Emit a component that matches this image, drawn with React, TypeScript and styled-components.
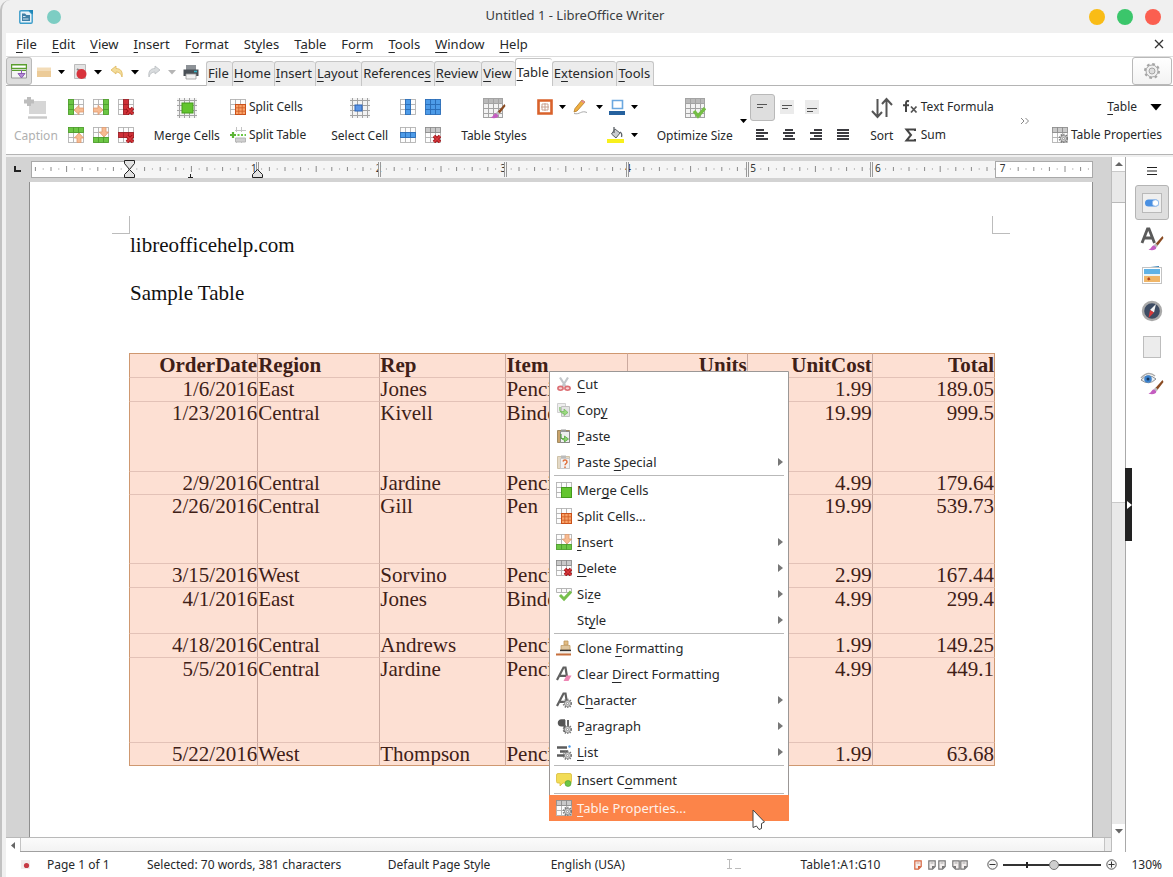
import React from 'react';
import styled, { createGlobalStyle, css } from 'styled-components';

const uiFont = '"Noto Sans", "Open Sans", sans-serif';
const docFont = '"Liberation Serif", "Times New Roman", serif';

const GlobalStyle = createGlobalStyle`
  *, *::before, *::after { box-sizing: border-box; }
  body { margin: 0; background: #efefef; font-family: ${uiFont}; font-size: 13px; color: #26282a; }
  button { font: inherit; color: inherit; border: 0; padding: 0; margin: 0; background: none; }
  u { text-decoration: underline; text-decoration-thickness: 1px; text-underline-offset: 3px; text-decoration-skip-ink: none; }
`;

/* ---------- window frame ---------- */

const Window = styled.div`
  display: flex;
  flex-direction: column;
  min-height: 100vh;
  padding-left: 4px;
  border-left: 2px solid #c2c2c2;
  border-top-left-radius: 10px;
  background: #f0f0f0;
`;

const TitleBar = styled.header`
  display: flex;
  align-items: center;
  height: 33px;
  padding: 0 12px 0 13px;
`;

const Title = styled.h1`
  flex: 1;
  margin: 0;
  padding-bottom: 3px;
  text-align: center;
  font-size: 13px;
  font-weight: 400;
  line-height: 18px;
  color: #3a3d40;
`;

const WindowButtons = styled.div<{ $before?: number }>`
  display: flex;
  align-items: center;
  gap: 12px;
  margin-left: ${p => p.$before ?? 0}px;
`;

const Dot = styled.button<{ $color: string; $size?: number }>`
  width: ${p => p.$size ?? 16}px;
  height: ${p => p.$size ?? 16}px;
  border-radius: 50%;
  background: ${p => p.$color};
`;

const MenuBar = styled.nav`
  display: flex;
  align-items: center;
  justify-content: space-between;
  height: 24px;
  padding: 0 8px 2px 10px;
  background: #fff;
  border-bottom: 1px solid #dcdcdc;
`;

const MenuItems = styled.div`
  display: flex;
  gap: 15px;
`;

const MenuButton = styled.button`
  line-height: 20px;
`;

const CloseButton = styled.button`
  display: flex;
`;

/* ---------- tab row ---------- */

const TabRow = styled.div`
  display: flex;
  align-items: flex-end;
  height: 29px;
  padding-right: 1px;
  background: #fff;
  border-bottom: 1px solid #b4b4b4;
`;

const FrameButton = styled.button<{ $right?: boolean }>`
  display: flex;
  align-items: center;
  justify-content: center;
  width: ${p => (p.$right ? 40 : 26)}px;
  height: 28px;
  margin-left: ${p => (p.$right ? 'auto' : '0')};
  border: 1px solid #b9b9b9;
  border-radius: 3px;
  background: ${p => (p.$right ? 'linear-gradient(#fff, #f3f3f3)' : '#dedede')};
`;

const QuickTools = styled.div`
  display: flex;
  align-items: center;
  height: 26px;
  gap: 6px;
  padding: 0 6px 0 3px;
`;

const QuickPair = styled.div`
  display: flex;
  align-items: center;
  gap: 5px;
`;

const IconButton = styled.button`
  display: flex;
  align-items: center;
  justify-content: center;
`;

const Tabs = styled.div`
  display: flex;
  align-items: flex-end;
  margin-bottom: -1px;
`;

const Tab = styled.button<{ $active?: boolean }>`
  height: ${p => (p.$active ? 28 : 25)}px;
  padding: 0 3px 2px 1px;
  line-height: 20px;
  border: 1px solid #c6c6c6;
  border-bottom: 0;
  border-right-width: 0;
  border-radius: 3px 3px 0 0;
  background: ${p => (p.$active ? '#fff' : '#ececec')};
  &:last-child { border-right-width: 1px; }
`;

/* ---------- ribbon ---------- */

const Ribbon = styled.div`
  display: flex;
  height: 69px;
  padding: 7px 11px 5px 8px;
  background: #fff;
  border-bottom: 1px solid #b4b4b4;
  font-size: 12px;
  white-space: nowrap;
`;

const Group = styled.div<{ $before?: number; $push?: boolean }>`
  display: flex;
  flex-direction: column;
  flex: none;
  margin-left: ${p => (p.$push ? 'auto' : `${p.$before ?? 0}px`)};
`;

const GroupRow = styled.div<{ $gap?: number; $end?: boolean }>`
  display: flex;
  align-items: center;
  justify-content: ${p => (p.$end ? 'flex-end' : 'flex-start')};
  height: 28px;
  gap: ${p => p.$gap ?? 0}px;
`;

const BigButton = styled.button<{ $before?: number; $muted?: boolean }>`
  display: flex;
  flex: none;
  flex-direction: column;
  align-items: center;
  height: 56px;
  margin-left: ${p => p.$before ?? 0}px;
  color: ${p => (p.$muted ? '#b0b0b0' : 'inherit')};
`;

const BigIcon = styled.span`
  display: flex;
  align-items: center;
  height: 30px;
`;

const BigLabel = styled.span`
  line-height: 26px;
`;

const TextButton = styled.button`
  display: flex;
  align-items: center;
  gap: 3px;
  line-height: 20px;
`;

const AlignButton = styled.button<{ $on?: boolean }>`
  display: flex;
  align-items: center;
  justify-content: center;
  width: 25px;
  height: 27px;
  border-radius: 3px;
  border: 1px solid ${p => (p.$on ? '#b9b9b9' : 'transparent')};
  background: ${p => (p.$on ? '#dedede' : 'transparent')};
`;

const SideSlot = styled.div<{ $before: number }>`
  display: flex;
  align-items: center;
  height: 56px;
  margin-left: ${p => p.$before}px;
`;

/* ---------- work area ---------- */

const Work = styled.div`
  display: flex;
  flex: 1;
  padding-top: 2px;
`;

const Main = styled.div`
  display: flex;
  flex: 1;
  min-width: 0;
  flex-direction: column;
`;

const Canvas = styled.div`
  display: flex;
  flex: 1;
  flex-direction: column;
  padding: 4px 18px 0 23px;
  background: #d3d3d3;
`;

const Ruler = styled.div`
  position: relative;
  display: flex;
  height: 17px;
  margin: 0 0 4px 2px;
`;

const RulerMargin = styled.div`
  width: 98px;
  border: 1px solid #a9a9a9;
  background: #fff;
`;

const RulerBody = styled.div`
  flex: 1;
  background: #f5f5f5;
`;

const RulerMarks = styled.svg`
  position: absolute;
  inset: 0;
  width: 100%;
  height: 17px;
  overflow: visible;
`;

const TabStop = styled.div`
  position: absolute;
  left: -17px;
  top: 5px;
  width: 7px;
  height: 6px;
  border-left: 2px solid #222;
  border-bottom: 2px solid #222;
`;

const Page = styled.main`
  position: relative;
  flex: 1;
  padding: 51px 97px 71px 99px;
  background: #fff;
  border-left: 1px solid #8f8f8f;
  border-right: 1px solid #8f8f8f;
  font-family: ${docFont};
  font-size: 21px;
  line-height: 24px;
  color: #111;
`;

const Corner = styled.span<{ $side: 'left' | 'right' }>`
  position: absolute;
  top: 34px;
  ${p => p.$side}: 82px;
  width: 18px;
  height: 18px;
  border-bottom: 1px solid #bcbcbc;
  ${p => (p.$side === 'left' ? 'border-right' : 'border-left')}: 1px solid #bcbcbc;
`;

const Para = styled.p`
  margin: 0;
  min-height: 24px;
  padding-left: 1px;
`;

const DataTable = styled.table`
  width: 100%;
  table-layout: fixed;
  border-collapse: separate;
  border-spacing: 0;
  background: #fde0d3;
  color: #3f2017;
`;

const DataRow = styled.tr<{ $height: number }>`
  height: ${p => p.$height}px;
`;

const cell = css<{ $right?: boolean }>`
  padding: 0;
  line-height: 22px;
  vertical-align: top;
  overflow: hidden;
  white-space: nowrap;
  text-align: ${p => (p.$right ? 'right' : 'left')};
  border-top: 1px solid #e3c2b7;
  border-left: 1px solid #cbaa9f;
  tr:first-child > & { border-top-color: #cf9870; }
  tr:last-child > & { border-bottom: 1px solid #cf9870; }
  &:first-child { border-left-color: #cf9870; }
  &:last-child { border-right: 1px solid #cf9870; }
`;

const HeadCell = styled.th<{ $right?: boolean }>`${cell}`;
const BodyCell = styled.td<{ $right?: boolean }>`${cell}`;

/* ---------- scroll bars ---------- */

const VScroll = styled.div`
  display: flex;
  flex-direction: column;
  width: 15px;
  background: #e9e9e9;
  border-left: 1px solid #bdbdbd;
  border-right: 1px solid #a9a9a9;
`;

const ScrollEnd = styled.button<{ $wide?: boolean }>`
  display: flex;
  align-items: center;
  justify-content: center;
  width: ${p => (p.$wide ? '14px' : '100%')};
  height: 14px;
  background: #fff;
`;

const VGap = styled.div<{ $grow: number }>`
  flex: ${p => p.$grow};
  border-top: 1px solid #c9c9c9;
`;

const VThumb = styled.div`
  flex: 300;
  background: #fdfdfd;
  border-top: 1px solid #b9b9b9;
`;

const HScroll = styled.div`
  display: flex;
  height: 15px;
  padding-right: 6px;
  border-top: 1px solid #b9b9b9;
  border-bottom: 1px solid #a0a0a0;
  background: #ececec;
`;

const HThumb = styled.div`
  flex: 1;
  background: linear-gradient(#fbfbfb, #f3f3f3);
  border-left: 1px solid #c4c4c4;
  border-right: 1px solid #c4c4c4;
`;

/* ---------- sidebar ---------- */

const Sidebar = styled.aside`
  position: relative;
  display: flex;
  flex-direction: column;
  align-items: center;
  gap: 1px;
  width: 47px;
  padding: 5px 0 0 5px;
  background: #fff;
`;

const SideMenu = styled.button`
  display: flex;
  height: 18px;
  align-items: center;
  margin-bottom: 4px;
`;

const DeckButton = styled.button<{ $on?: boolean }>`
  display: flex;
  align-items: center;
  justify-content: center;
  width: 34px;
  height: 35px;
  border-radius: 3px;
  border: 1px solid ${p => (p.$on ? '#b4b4b4' : 'transparent')};
  background: ${p => (p.$on ? '#dedede' : 'transparent')};
`;

const Handle = styled.button`
  position: absolute;
  left: -1px;
  top: calc(50% - 37px);
  width: 7px;
  height: 73px;
  background: #222;
`;

/* ---------- status bar ---------- */

const StatusBar = styled.footer`
  display: grid;
  grid-template-columns: 27px 100px 241fr 163fr 176fr 74fr 114fr auto;
  align-items: center;
  height: 25px;
  padding: 0 11px 0 14px;
  background: #fff;
  font-size: 12px;
  white-space: nowrap;
`;

const StatusTools = styled.div`
  display: flex;
  align-items: center;
`;

const ViewIcons = styled.div`
  display: flex;
  gap: 6px;
  margin-right: 19px;
`;

const ZoomRange = styled.input`
  appearance: none;
  width: 98px;
  height: 12px;
  margin: 0 5px;
  background:
    linear-gradient(#222, #222) 23px 3px / 2px 6px no-repeat,
    linear-gradient(#333, #333) 0 5px / 100% 2px no-repeat;
  &::-webkit-slider-thumb {
    appearance: none;
    width: 10px;
    height: 10px;
    border: 1px solid #777;
    border-radius: 50%;
    background: #cfcfcf;
  }
`;

const ZoomValue = styled.span`
  margin-left: 14px;
`;

/* ---------- context menu ---------- */

const Popup = styled.div`
  position: absolute;
  left: 519px;
  top: 189px;
  z-index: 2;
  width: 240px;
  background: #fff;
  border-radius: 1px;
  box-shadow: inset 0 0 0 1px #9b9796;
  font-family: ${uiFont};
  font-size: 13px;
  color: #26282a;
`;

const PopupItem = styled.button<{ $on?: boolean }>`
  display: flex;
  align-items: center;
  width: 100%;
  height: 26px;
  padding: 0 6px 0 7px;
  gap: 4px;
  text-align: left;
  line-height: 20px;
  ${p => p.$on && css`background: #fc8449; color: #fff1e8;`}
`;

const PopupIcon = styled.span`
  display: flex;
  width: 17px;
`;

const PopupText = styled.span`
  flex: 1;
`;

const PopupRule = styled.hr`
  height: 2px;
  margin: 0 5px;
  border: 0;
  background: linear-gradient(#b9b9b9 50%, transparent 50%);
`;

const Pointer = styled.svg`
  position: absolute;
  left: 722px;
  top: 627px;
  z-index: 3;
`;

/* ---------- helpers and icons ---------- */

/* "_" marks the access key: the letter after it is underlined. */
const Label = ({ text }: { text: string }) => {
  const at = text.indexOf('_');
  if (at < 0) return <>{text}</>;
  return <>{text.slice(0, at)}<u>{text[at + 1]}</u>{text.slice(at + 2)}</>;
};

const Down = ({ color = '#000', w = 8 }: { color?: string; w?: number }) => (
  <svg width={w} height={w / 2 + 1} viewBox="0 0 8 5"><path d="M0 0H8L4 4.6Z" fill={color} /></svg>
);

const Arrow = ({ dir, at = 'br' }: { dir: 'l' | 'r' | 'u' | 'd'; at?: string }) => {
  const turn = { l: 0, u: 90, r: 180, d: 270 }[dir];
  const [x, y] = at === 'br' ? [11, 11] : at === 'bl' ? [5, 11] : [11, 5];
  return (
    <g transform={`translate(${x} ${y}) rotate(${turn})`}>
      <path d="M-5 0L0-4.6V-2H4.6V2H0V4.6Z" fill="#f7bb92" stroke="#e09a6e" strokeWidth=".8" />
    </g>
  );
};

const Cross = () => (
  <g>
    <path d="M9 9L15 15M15 9L9 15" stroke="#a01218" strokeWidth="3.6" />
    <path d="M9 9L15 15M15 9L9 15" stroke="#d8383c" strokeWidth="1.6" />
  </g>
);

const Gear = ({ x = 11.5, y = 11.5, r = 3 }: { x?: number; y?: number; r?: number }) => (
  <g transform={`translate(${x} ${y})`}>
    <circle r={r + 0.9} fill="none" stroke="#777" strokeWidth="1.8" strokeDasharray={`${r * 0.42} ${r * 0.42}`} />
    <circle r={r} fill="#dcdcdc" stroke="#7d7d7d" strokeWidth=".9" />
    <circle r={r * 0.38} fill="#fff" stroke="#7d7d7d" strokeWidth=".8" />
  </g>
);

const fills: Record<string, string> = {
  w: '#fdfdfd', g: '#6cc644', r: '#cf3038', b: '#4d9be8', h: '#c9c9c9',
};

/* A 3 by 3 table; each letter of `map` is the colour of one cell, row by row. */
const Grid = ({ map = 'wwwwwwwww', children }: { map?: string; children?: React.ReactNode }) => (
  <svg width="16" height="16" viewBox="0 0 16 16">
    {[...'wh', ...'grb'].map(kind => map.split('').map((c, i) => c === kind && (
      <rect
        key={kind + i}
        x={0.5 + (i % 3) * 5}
        y={0.5 + Math.floor(i / 3) * 5}
        width="5"
        height="5"
        fill={fills[c]}
        stroke={c === 'g' ? '#4f9e2e' : c === 'r' ? '#9c2228' : c === 'b' ? '#2a6db8' : c === 'h' ? '#8f8f8f' : '#b3b3b3'}
        strokeWidth=".9"
      />
    )))}
    {children}
  </svg>
);

const Mesh = ({ children, head }: { children?: React.ReactNode; head?: boolean }) => (
  <svg width="22" height="22" viewBox="0 0 22 22">
    <rect x="1" y="1" width="20" height="20" fill="#f3f3f3" />
    {head && <rect x="1" y="1" width="20" height="5" fill="#b9b9b9" />}
    <path
      d={head
        ? 'M1 6.5H21M1 11.5H21M1 16.5H21M1.5 1V21M6.5 1V21M11.5 1V21M16.5 1V21M20.5 1V21M1 1.5H21M1 20.5H21'
        : 'M1 3.5H21M1 8.5H21M1 13.5H21M1 18.5H21M3.5 1V21M8.5 1V21M13.5 1V21M18.5 1V21'}
      stroke="#a3a3a3"
    />
    {children}
  </svg>
);

const SplitCells = () => (
  <Grid>
    <rect x="5.5" y="5.5" width="10" height="10" fill="#f9a268" stroke="#c9501a" />
    <path d="M8.8 5V16M12.2 5V16M5 8.8H16M5 12.2H16" stroke="#cf5a22" strokeWidth=".8" />
  </Grid>
);

const Brush = ({ x = 0, y = 0 }: { x?: number; y?: number }) => (
  <g transform={`translate(${x} ${y})`}>
    <path d="M12.500 0L5 8.500L7.200 10.300L13.500 2Z" fill="#8a4b22" />
    <path d="M5.600 7.200L3.800 9.300L6.200 11.400L8 9.400Z" fill="#b9b9b9" />
    <path d="M3.800 9.300C1 10.500 1.500 12.800-1.500 13.500C2 15.200 6.500 14 6.300 11.300Z" fill="#c45cc0" />
  </g>
);

const PageLines = ({ y, on }: { y: number; on?: boolean }) => (
  <svg width="14" height="14" viewBox="0 0 14 14">
    {!on && <rect width="14" height="14" fill="#ebebeb" />}
    <path d={`M2 ${y}.5H12M2 ${y + 3}.5H8`} stroke="#555" />
  </svg>
);

const AlignLines = ({ kind }: { kind: 'l' | 'c' | 'r' | 'j' }) => {
  const x = { l: 0, c: 2, r: 4, j: 0 }[kind];
  const w = kind === 'j' ? 12 : 8;
  return (
    <svg width="13" height="12" viewBox="0 0 13 12">
      <path d="M0 4H12M0 10H12" stroke="#3b3b40" strokeWidth="2" />
      <path d={`M${x} 1H${x + w}M${x} 7H${x + w}`} stroke="#3b3b40" strokeWidth="2" />
    </svg>
  );
};

const SlantedA = () => (
  <path d="M1 14L7.500 1.500H9.500L11.500 14M4 9.800H11" fill="none" stroke="#606060" strokeWidth="2.200" />
);

const icons: Record<string, React.ReactNode> = {
  cut: (
    <svg width="16" height="16" viewBox="0 0 16 16">
      <path d="M4 1.500L10 11M12 1.500L6 11" stroke="#c3c6ca" strokeWidth="2.200" />
      <ellipse cx="4.500" cy="12.300" rx="2.600" ry="1.900" fill="#f6d5d6" stroke="#dc6f74" strokeWidth="1.600" />
      <ellipse cx="11.500" cy="12.300" rx="2.600" ry="1.900" fill="#f6d5d6" stroke="#dc6f74" strokeWidth="1.600" />
    </svg>
  ),
  copy: (
    <svg width="16" height="16" viewBox="0 0 16 16">
      <path d="M1.500 1.500H9.500V10.500H1.500Z" fill="#eee" stroke="#cfcfcf" />
      <path d="M5.500 4.500H13.500V14.500H5.500Z" fill="#e4e4e4" stroke="#c0c0c0" />
      <path d="M4 5V9.500H8V7L12 10.500L8 13.500V11.500C5 11.500 3.500 9 4 5Z" fill="#9bdb80" stroke="#6db457" strokeWidth=".7" />
    </svg>
  ),
  paste: (
    <svg width="16" height="16" viewBox="0 0 16 16">
      <path d="M1.500 2.500H13.500V14.500H1.500Z" fill="#c9a36b" stroke="#a08a62" />
      <path d="M4.500 3.500H13.500V14.500H4.500Z" fill="#efefef" stroke="#8a8a8a" />
      <path d="M5 1.500H10V4H5Z" fill="#999" />
      <path d="M5 6V10.500H8.500V8L12.500 11L8.500 14V12C6 12 4.500 10 5 6Z" fill="#8bd46c" stroke="#4d9c38" strokeWidth=".7" />
    </svg>
  ),
  special: (
    <svg width="16" height="16" viewBox="0 0 16 16">
      <path d="M1.500 2.500H13.500V14.500H1.500Z" fill="#e4d9c6" stroke="#cfc2a8" />
      <path d="M4.500 4.500H13.500V14.500H4.500Z" fill="#f2f2f2" stroke="#c9c9c9" />
      <path d="M5 1.500H10V4H5Z" fill="#bbb" />
      <path d="M7 7.500C7.500 5.500 11 5.500 11 8C11 9.500 9 9.500 9 11.300M9 12.500V14" fill="none" stroke="#e0703c" strokeWidth="1.500" />
    </svg>
  ),
  merge: <Grid><rect x="5.500" y="5.500" width="10" height="10" fill="#63c52f" stroke="#459a1d" /></Grid>,
  split: <SplitCells />,
  insert: <Grid map="wwwwwwggg"><Arrow dir="d" at="tr" /></Grid>,
  del: <Grid map="hhhwwwwww"><Cross /></Grid>,
  size: (
    <svg width="16" height="16" viewBox="0 0 16 16">
      <path d="M.5 2.500H15.500V6.500H.5ZM5.500 2.500V6.500M10.500 2.500V6.500" fill="#fafafa" stroke="#b5b5b5" />
      <path d="M4 9L8 13L15 5.500" fill="none" stroke="#76bf4c" strokeWidth="3" />
    </svg>
  ),
  clone: (
    <svg width="16" height="16" viewBox="0 0 16 16">
      <path d="M8 1H12V5H8Z" fill="#e3bd83" stroke="#bd945a" strokeWidth=".8" />
      <path d="M5 5.500H14V10H5Z" fill="#dfc59c" stroke="#c29e68" strokeWidth=".8" />
      <path d="M4 10.500H15" stroke="#333" strokeWidth="1.600" />
      <path d="M4.500 11.500H15V14.500H1Z" fill="#f3efe8" />
      <path d="M0 14.500H15" stroke="#c76f3d" strokeWidth="2" />
    </svg>
  ),
  clear: (
    <svg width="16" height="16" viewBox="0 0 16 16">
      <SlantedA />
      <path d="M10.500 9.500H15.500L12.500 15H7.500Z" fill="#ee86b4" />
    </svg>
  ),
  char: <svg width="16" height="16" viewBox="0 0 16 16"><SlantedA /><Gear /></svg>,
  para: (
    <svg width="16" height="16" viewBox="0 0 16 16">
      <path d="M12 2V14M8.500 2V14" stroke="#555" strokeWidth="1.800" />
      <path d="M13 1.200H5.500C.5 1.200.5 8.500 5.500 8.500H9V1.200Z" fill="#555" />
      <Gear />
    </svg>
  ),
  list: (
    <svg width="16" height="16" viewBox="0 0 16 16">
      <path d="M1 3.500H11M4 7.500H12M1 11.500H9" stroke="#5c5c5c" strokeWidth="2.400" />
      <circle cx="13.500" cy="2.500" r="1.200" fill="#4d9be8" />
      <Gear />
    </svg>
  ),
  comment: (
    <svg width="16" height="16" viewBox="0 0 16 16">
      <path d="M2 1.500H14Q15.500 1.500 15.500 3V9.500Q15.500 11 14 11H7L4 14V11H2Q.5 11 .5 9.500V3Q.5 1.500 2 1.500Z" fill="#f2dc56" stroke="#d9bd3a" strokeWidth=".8" />
      <circle cx="12" cy="11.500" r="3" fill="#6cc644" stroke="#4b9a2b" strokeWidth=".6" />
    </svg>
  ),
  props: <Grid map="hhhwwwwww"><Gear /></Grid>,
};

const popupItems: Array<[string, string, boolean?] | null> = [
  ['cut', '_Cut'], ['copy', 'Cop_y'], ['paste', '_Paste'], ['special', 'Paste _Special', true], null,
  ['merge', 'Mer_ge Cells'], ['split', 'Split Cells...'], ['insert', '_Insert', true], ['del', '_Delete', true],
  ['size', 'Si_ze', true], ['', 'St_yle', true], null,
  ['clone', 'Clone _Formatting'], ['clear', 'Clear _Direct Formatting'], ['char', 'C_haracter', true],
  ['para', 'P_aragraph', true], ['list', '_List', true], null,
  ['comment', 'Insert C_omment'], null, ['props', '_Table Properties...'],
];

const menus = ['_File', '_Edit', '_View', '_Insert', 'F_ormat', 'St_yles', 'T_able', 'Fo_rm', '_Tools', '_Window', '_Help'];
const tabs = ['_File', '_Home', '_Insert', '_Layout', 'Reference_s', '_Review', '_View', '_Table', 'E_xtension', '_Tools'];

const columns = [
  { name: 'OrderDate', width: 128, right: true },
  { name: 'Region', width: 122 },
  { name: 'Rep', width: 126 },
  { name: 'Item', width: 121 },
  { name: 'Units', width: 120, right: true },
  { name: 'UnitCost', width: 125, right: true },
  { name: 'Total', width: 123, right: true },
];

const orders: Array<{ h: number; v: string[] }> = [
  { h: 24, v: ['1/6/2016', 'East', 'Jones', 'Pencil', '95', '1.99', '189.05'] },
  { h: 70, v: ['1/23/2016', 'Central', 'Kivell', 'Binder', '50', '19.99', '999.5'] },
  { h: 23, v: ['2/9/2016', 'Central', 'Jardine', 'Pencil', '36', '4.99', '179.64'] },
  { h: 69, v: ['2/26/2016', 'Central', 'Gill', 'Pen', '27', '19.99', '539.73'] },
  { h: 24, v: ['3/15/2016', 'West', 'Sorvino', 'Pencil', '56', '2.99', '167.44'] },
  { h: 46, v: ['4/1/2016', 'East', 'Jones', 'Binder', '60', '4.99', '299.4'] },
  { h: 24, v: ['4/18/2016', 'Central', 'Andrews', 'Pencil', '75', '1.99', '149.25'] },
  { h: 85, v: ['5/5/2016', 'Central', 'Jardine', 'Pencil', '90', '4.99', '449.1'] },
  { h: 24, v: ['5/22/2016', 'West', 'Thompson', 'Pencil', '32', '1.99', '63.68'] },
];

const inch = 124.8;
const rulerZero = 98;

const RulerScale = () => {
  const marks: React.ReactNode[] = [];
  for (let i = -12; i <= 123; i++) {
    const x = rulerZero + (i * inch) / 16;
    if (x > 1058) break;
    if (i % 16 === 0) continue;
    const half = i % 8 === 0 ? 3 : i % 2 === 0 ? 2 : 0.5;
    marks.push(<path key={i} d={`M${x} ${8 - half}V${8 + half}`} stroke="#8a8a8a" />);
  }
  return (
    <RulerMarks fontFamily={uiFont} fontSize="10" fill="#333">
      {marks}
      {[1, 2, 3, 4, 5, 6, 7].map(n => (
        <text key={n} x={rulerZero + n * inch} y="11" textAnchor="middle">{n}</text>
      ))}
      {[226, 348, 474, 596, 716, 840].map(x => (
        <g key={x}>
          <rect x={x - 1} y="0" width="3" height="17" fill="#f5f5f5" />
          <path d={`M${x - 0.5} 1V16M${x + 1.5} 1V16`} stroke="#999" />
        </g>
      ))}
      <path d="M159.500 13V17M157 16.500H162" stroke="#222" />
      <g fill="#e2e2e2" stroke="#222">
        <path d="M93.500-.5H103.500V2.500L98.500 8.500L93.500 2.500Z" />
        <path d="M93.500 16.500H103.500V13.500L98.500 8.500L93.500 13.500Z" />
        <path d="M221.500 16.500H231.500V13.500L226.500 8.500L221.500 13.500Z" />
      </g>
    </RulerMarks>
  );
};

/* A sheet with a folded corner, in the single, multiple and book layouts. */
const Sheet = ({ x = 0, color, flip }: { x?: number; color: string; flip?: boolean }) => (
  <g transform={flip ? `translate(${x + 8} 0) scale(-1 1)` : `translate(${x} 0)`}>
    <path d="M.8 .8H7.200V6.500L4.500 9.200H.8Z" fill="#f3efee" stroke={color} strokeWidth="1.200" />
    <path d="M7.200 6H4V9.200Z" fill={color} />
    <path d="M2.500 3H5.500" stroke={color} strokeWidth=".6" />
  </g>
);

const ZoomGlyph = ({ plus }: { plus?: boolean }) => (
  <svg width="11" height="11" viewBox="0 0 11 11">
    <circle cx="5.500" cy="5.500" r="4.700" fill="#f6f6f6" stroke="#555" />
    <path d={plus ? 'M2.500 5.500H8.500M5.500 2.500V8.500' : 'M2.500 5.500H8.500'} stroke="#333" />
  </svg>
);

export default function App() {
  return (
    <Window>
      <GlobalStyle />
      <TitleBar>
        <svg width="14" height="14" viewBox="0 0 14 14">
          <path d="M2 .8H10L13.200 4V12Q13.200 13.200 12 13.200H2Q.8 13.200 .8 12V2Q.8 .8 2 .8Z" fill="#e6f2f9" stroke="#3b9cc9" strokeWidth="1.400" />
          <path d="M9.500 0H14V4.500Z" fill="#1d86b8" />
          <path d="M3 3.500H6L7.500 5H11V11H3Z" fill="#3f7fa6" />
          <path d="M4 6.500H6.500M4 9H9.500" stroke="#cfe4f0" />
        </svg>
        <WindowButtons $before={14}>
          <Dot $color="#7dcdc3" $size={14} aria-label="Pin window" />
        </WindowButtons>
        <Title>Untitled 1 - LibreOffice Writer</Title>
        <WindowButtons>
          <Dot $color="#f9bc16" aria-label="Minimize" />
          <Dot $color="#3bc66b" aria-label="Maximize" />
          <Dot $color="#fb5f50" aria-label="Close" />
        </WindowButtons>
      </TitleBar>

      <MenuBar>
        <MenuItems>
          {menus.map(m => <MenuButton key={m}><Label text={m} /></MenuButton>)}
        </MenuItems>
        <CloseButton aria-label="Close document">
          <svg width="12" height="10" viewBox="0 0 12 10"><path d="M2 1L10 9M10 1L2 9" stroke="#333" strokeWidth="1.300" /></svg>
        </CloseButton>
      </MenuBar>

      <TabRow>
        <FrameButton aria-label="Menubar">
          <svg width="16" height="15" viewBox="0 0 16 15">
            <path d="M.5 3.500H15.500V14H.5Z" fill="#f4f4f4" stroke="#999" />
            <path d="M.5 .8H15.500V4.500H.5Z" fill="#fff" stroke="#5a9e2e" strokeWidth="1.400" />
            <path d="M1 6.500H15" stroke="#5a9e2e" />
            <path d="M10.500 6V10M7 9.500H14L10.500 14Z" fill="#b58ad6" stroke="#8a5cb0" />
          </svg>
        </FrameButton>
        <QuickTools>
          <QuickPair>
            <IconButton aria-label="Open">
              <svg width="18" height="16" viewBox="0 0 18 16"><path d="M2 4H16V13H2Z" fill="#eccb98" /><path d="M2 3.500H16V7H2Z" fill="#f3dcb8" /></svg>
            </IconButton>
            <Down w={7} />
          </QuickPair>
          <QuickPair>
            <IconButton aria-label="Save">
              <svg width="18" height="16" viewBox="0 0 18 16">
                <path d="M3.500 .5H14.500V14.500H3.500Z" fill="#e3e3e3" stroke="#bbb" />
                <path d="M6 5L9 7" stroke="#888" strokeWidth="2" />
                <circle cx="10.500" cy="10" r="5" fill="#d8333c" />
              </svg>
            </IconButton>
            <Down />
          </QuickPair>
          <QuickPair>
            <IconButton aria-label="Undo">
              <svg width="18" height="16" viewBox="0 0 18 16"><path d="M3 6L8 2V4.500C13 4.500 15 8 14 13C13 9.500 11 8 8 8V10Z" fill="#f3dc9a" stroke="#e0b85c" strokeWidth=".8" /></svg>
            </IconButton>
            <Down />
          </QuickPair>
          <QuickPair>
            <IconButton aria-label="Redo">
              <svg width="18" height="16" viewBox="0 0 18 16"><path d="M15 6L10 2V4.500C5 4.500 3 8 4 13C5 9.500 7 8 10 8V10Z" fill="#d9dcde" stroke="#b9bdc0" strokeWidth=".8" /></svg>
            </IconButton>
            <Down color="#b5b5b5" />
          </QuickPair>
          <IconButton aria-label="Print">
            <svg width="18" height="16" viewBox="0 0 18 16">
              <path d="M4 1H14V6H4Z" fill="#8d9297" />
              <path d="M1.500 5.500H16.500V12H1.500Z" fill="#4a5056" />
              <path d="M4 10H14V15H4Z" fill="#f2f2f2" stroke="#999" strokeWidth=".8" />
              <path d="M12 7.500H15" stroke="#35b6c9" strokeWidth="1.500" />
            </svg>
          </IconButton>
        </QuickTools>
        <Tabs role="tablist">
          {tabs.map((t, i) => (
            <Tab key={t} role="tab" aria-selected={i === 7} $active={i === 7}><Label text={t} /></Tab>
          ))}
        </Tabs>
        <FrameButton $right aria-label="Customize notebookbar">
          <svg width="18" height="18" viewBox="0 0 18 18">
            <circle cx="9" cy="9" r="7" fill="none" stroke="#a5a5a5" strokeWidth="2" strokeDasharray="2.750 2.750" />
            <circle cx="9" cy="9" r="6" fill="#f0f0f0" stroke="#a5a5a5" />
            <circle cx="9" cy="9" r="3" fill="#ddd" stroke="#a5a5a5" />
          </svg>
        </FrameButton>
      </TabRow>

      <Ribbon>
        <BigButton $muted disabled>
          <BigIcon>
            <svg width="24" height="22" viewBox="0 0 24 22">
              <path d="M5 4H22V17H5Z" fill="#d6d6d6" />
              <path d="M5 0V9M0 4.500H10" stroke="#bdbdbd" strokeWidth="4" />
              <path d="M4 20.500H23" stroke="#c9c9c9" strokeWidth="2.400" />
            </svg>
          </BigIcon>
          <BigLabel>Caption</BigLabel>
        </BigButton>
        <Group $before={10}>
          <GroupRow $gap={9}>
            <IconButton aria-label="Insert column before"><Grid map="gwwgwwgww"><Arrow dir="l" /></Grid></IconButton>
            <IconButton aria-label="Insert column after"><Grid map="wwgwwgwwg"><Arrow dir="r" at="bl" /></Grid></IconButton>
            <IconButton aria-label="Delete column"><Grid map="wrwwrwwrw"><Cross /></Grid></IconButton>
          </GroupRow>
          <GroupRow $gap={9}>
            <IconButton aria-label="Insert row above"><Grid map="gggwwwwww"><Arrow dir="u" /></Grid></IconButton>
            <IconButton aria-label="Insert row below"><Grid map="wwwwwwggg"><Arrow dir="d" at="tr" /></Grid></IconButton>
            <IconButton aria-label="Delete row"><Grid map="wwwrrrwww"><Cross /></Grid></IconButton>
          </GroupRow>
        </Group>
        <BigButton $before={20}>
          <BigIcon><Mesh><rect x="6" y="6" width="11" height="10" fill="#63c52f" stroke="#459a1d" /></Mesh></BigIcon>
          <BigLabel>Merge Cells</BigLabel>
        </BigButton>
        <Group $before={10}>
          <GroupRow><TextButton><SplitCells />Split Cells</TextButton></GroupRow>
          <GroupRow>
            <TextButton>
              <svg width="16" height="16" viewBox="0 0 16 16">
                <path d="M6.500 0V5M11.500 0V5M5 3.500H16M6.500 11V16M11.500 11V16" stroke="#c3c3c3" fill="none" />
                <path d="M5.500 11H15.500V15H5.500Z" fill="#cfcfcf" stroke="#b5b5b5" />
                <path d="M7.500 8H16" stroke="#6cc644" strokeWidth="2" strokeDasharray="2 1.500" />
                <path d="M3 5V11M0 8H6" stroke="#5cb436" strokeWidth="2.200" />
              </svg>
              Split Table
            </TextButton>
          </GroupRow>
        </Group>
        <BigButton $before={25}>
          <BigIcon><Mesh><rect x="6" y="8" width="7" height="6" fill="#5b95e6" stroke="#2b62b4" /></Mesh></BigIcon>
          <BigLabel>Select Cell</BigLabel>
        </BigButton>
        <Group $before={12}>
          <GroupRow $gap={9}>
            <IconButton aria-label="Select column"><Grid map="wbwwbwwbw" /></IconButton>
            <IconButton aria-label="Select table"><Grid map="bbbbbbbbb" /></IconButton>
          </GroupRow>
          <GroupRow $gap={9}>
            <IconButton aria-label="Select row"><Grid map="wwwbbbwww" /></IconButton>
            <IconButton aria-label="Delete table"><Grid map="hhhwwwwww"><Cross /></Grid></IconButton>
          </GroupRow>
        </Group>
        <BigButton $before={20}>
          <BigIcon>
            <svg width="24" height="22" viewBox="0 0 24 22"><Mesh head /><Brush x={10} y={7} /></svg>
          </BigIcon>
          <BigLabel>Table Styles</BigLabel>
        </BigButton>
        <Group $before={10}>
          <GroupRow $gap={6}>
            <IconButton aria-label="Borders">
              <svg width="16" height="16" viewBox="0 0 16 16">
                <path d="M1.500 1.500H14.500V14.500H1.500Z" fill="#fff" stroke="#d9622b" strokeWidth="2.600" />
                <path d="M5 5H11V11H5ZM8 4V12M4 8H12" fill="none" stroke="#c9a394" />
              </svg>
            </IconButton>
            <Down w={7} />
            <IconButton aria-label="Border style">
              <svg width="18" height="16" viewBox="0 0 18 16">
                <path d="M10 1L13 3L5 12L2 13L3 9.500Z" fill="#f0b040" stroke="#b27a2a" strokeWidth=".8" />
                <path d="M10 1L13 3L11.800 4.300L8.900 2.200Z" fill="#e08a9a" />
                <path d="M2 14.500C8 16 9 11 15 13.500" fill="none" stroke="#aaa" />
              </svg>
            </IconButton>
            <Down w={7} />
            <IconButton aria-label="Border colour">
              <svg width="16" height="16" viewBox="0 0 16 16">
                <path d="M3.500 1.500H13.500V9.500H3.500Z" fill="#fff" stroke="#6ba8e0" strokeWidth="1.600" />
                <rect y="12" width="16" height="4" fill="#25619e" />
              </svg>
            </IconButton>
            <Down w={7} />
          </GroupRow>
          <GroupRow $gap={6} $end>
            <IconButton aria-label="Cell background">
              <svg width="18" height="16" viewBox="0 0 18 16">
                <path d="M8 2L13 6L9 11L4.500 7Z" fill="#c9ccd0" stroke="#5b6066" />
                <path d="M7 0V6M13 5C15 6 15 8 14.500 10" fill="none" stroke="#5b6066" strokeWidth="1.300" />
                <rect x="0" y="12" width="17" height="4" fill="#f8f01c" />
              </svg>
            </IconButton>
            <Down w={7} />
          </GroupRow>
        </Group>
        <BigButton $before={19}>
          <BigIcon><Mesh head><path d="M10 14L14 19L21 11" fill="none" stroke="#74be45" strokeWidth="3.400" /></Mesh></BigIcon>
          <BigLabel>Optimize Size</BigLabel>
        </BigButton>
        <SideSlot $before={7}><Down w={7} /></SideSlot>
        <Group $before={3}>
          <GroupRow>
            <AlignButton $on aria-label="Align top"><PageLines y={4} on /></AlignButton>
            <AlignButton aria-label="Centre vertically"><PageLines y={5} /></AlignButton>
            <AlignButton aria-label="Align bottom"><PageLines y={8} /></AlignButton>
          </GroupRow>
          <GroupRow $gap={2}>
            <AlignButton aria-label="Align left"><AlignLines kind="l" /></AlignButton>
            <AlignButton aria-label="Centre"><AlignLines kind="c" /></AlignButton>
            <AlignButton aria-label="Align right"><AlignLines kind="r" /></AlignButton>
            <AlignButton aria-label="Justify"><AlignLines kind="j" /></AlignButton>
          </GroupRow>
        </Group>
        <BigButton $before={14}>
          <BigIcon>
            <svg width="24" height="22" viewBox="0 0 24 22">
              <path d="M7.500 2V20M2 14L7.500 20L12 15M16.500 20V2M12 7L16.500 2L22 8" fill="none" stroke="#555" strokeWidth="2" />
            </svg>
          </BigIcon>
          <BigLabel>Sort</BigLabel>
        </BigButton>
        <Group $before={8}>
          <GroupRow>
            <TextButton>
              <svg width="16" height="16" viewBox="0 0 16 16">
                <path d="M7 2.200C4.500 1.500 4 2.500 4 5V13M1 6.300H7" fill="none" stroke="#444" strokeWidth="2" />
                <path d="M9 7.500L14.500 13.500M14.500 7.500L9 13.500" stroke="#555" strokeWidth="1.800" />
              </svg>
              Text Formula
            </TextButton>
          </GroupRow>
          <GroupRow>
            <TextButton>
              <svg width="16" height="16" viewBox="0 0 16 16"><path d="M13 4V2.500H4.500L9 8L4.500 13.500H13V12" fill="none" stroke="#444" strokeWidth="2" /></svg>
              Sum
            </TextButton>
          </GroupRow>
        </Group>
        <SideSlot $before={26}>
          <svg width="10" height="8" viewBox="0 0 10 8"><path d="M1 1L4 4L1 7M5.500 1L8.500 4L5.500 7" fill="none" stroke="#888" /></svg>
        </SideSlot>
        <Group $push>
          <GroupRow $gap={13} $end>
            <TextButton><span><Label text="_Table" /></span></TextButton>
            <Down w={12} />
          </GroupRow>
          <GroupRow><TextButton>{icons.props}Table Properties</TextButton></GroupRow>
        </Group>
      </Ribbon>

      <Work>
        <Main>
          <Canvas>
            <Ruler>
              <TabStop />
              <RulerMargin />
              <RulerBody />
              <RulerMargin />
              <RulerScale />
            </Ruler>
            <Page>
              <Corner $side="left" />
              <Corner $side="right" />
              <Para>libreofficehelp.com</Para>
              <Para />
              <Para>Sample Table</Para>
              <Para />
              <Para />
              <DataTable>
                <colgroup>{columns.map(c => <col key={c.name} width={c.width} />)}</colgroup>
                <tbody>
                  <DataRow $height={24}>
                    {columns.map(c => <HeadCell key={c.name} $right={c.right}>{c.name}</HeadCell>)}
                  </DataRow>
                  {orders.map(o => (
                    <DataRow key={o.v[0]} $height={o.h}>
                      {o.v.map((v, i) => <BodyCell key={i} $right={columns[i].right}>{v}</BodyCell>)}
                    </DataRow>
                  ))}
                </tbody>
              </DataTable>
              <Popup role="menu">
                {popupItems.map((it, i) => it === null
                  ? <PopupRule key={i} />
                  : (
                    <PopupItem key={i} role="menuitem" $on={it[0] === 'props'}>
                      <PopupIcon>{icons[it[0]]}</PopupIcon>
                      <PopupText><Label text={it[1]} /></PopupText>
                      {it[2] && <svg width="5" height="8" viewBox="0 0 5 8"><path d="M0 0L5 4L0 8Z" fill="#777" /></svg>}
                    </PopupItem>
                  ))}
              </Popup>
              <Pointer width="14" height="22" viewBox="0 0 14 22">
                <path d="M1 1L12.500 13L9.500 14.500L9.500 19.500L7 20.500L4.500 17L1 18.500Z" fill="#fff" stroke="#444" strokeLinejoin="round" />
              </Pointer>
            </Page>
          </Canvas>
          <HScroll>
            <ScrollEnd $wide aria-label="Scroll left">
              <svg width="4" height="7" viewBox="0 0 4 7"><path d="M4 0V7L0 3.500Z" fill="#666" /></svg>
            </ScrollEnd>
            <HThumb />
          </HScroll>
        </Main>
        <VScroll>
          <ScrollEnd aria-label="Scroll up">
            <svg width="8" height="4" viewBox="0 0 8 4"><path d="M0 4H8L4 0Z" fill="#666" /></svg>
          </ScrollEnd>
          <VGap $grow={30} />
          <VThumb />
          <VGap $grow={322} />
          <ScrollEnd aria-label="Scroll down"><Down color="#666" /></ScrollEnd>
          <ScrollEnd as="div" />
        </VScroll>
        <Sidebar>
          <SideMenu aria-label="Sidebar settings">
            <svg width="10" height="8" viewBox="0 0 10 8"><path d="M0 .5H10M0 4H10M0 7.500H10" stroke="#222" /></svg>
          </SideMenu>
          <DeckButton $on aria-label="Properties">
            <svg width="20" height="20" viewBox="0 0 20 20">
              <rect x=".5" y=".5" width="19" height="19" fill="#efefef" stroke="#b9b9b9" />
              <rect x="3" y="6.500" width="14" height="7" rx="3.500" fill="#4a90e2" />
              <circle cx="13.500" cy="10" r="3.200" fill="#fff" stroke="#8bb6ea" strokeWidth=".8" />
            </svg>
          </DeckButton>
          <DeckButton aria-label="Styles">
            <svg width="24" height="24" viewBox="0 0 24 24">
              <path d="M2 16L7.500 2H9L14.500 16M4.500 11H12" fill="none" stroke="#5a5a5a" strokeWidth="2.800" />
              <Brush x={10} y={9} />
            </svg>
          </DeckButton>
          <DeckButton aria-label="Gallery">
            <svg width="22" height="20" viewBox="0 0 22 20">
              <path d="M1 3L18 1V10L2 16Z" fill="#2f7fb5" />
              <rect x="1.500" y="2.500" width="19" height="16" fill="#fff" stroke="#c3c3c3" />
              <path d="M3 4H19V10H3Z" fill="#5fb2e6" />
              <path d="M3 9H19V11H3Z" fill="#e9f3f6" />
              <path d="M3 11H19V17H3Z" fill="#f0b668" />
              <path d="M6 14L8 12L9.500 14.500L7.500 15.500Z" fill="#b3441e" />
            </svg>
          </DeckButton>
          <DeckButton aria-label="Navigator">
            <svg width="22" height="22" viewBox="0 0 22 22">
              <circle cx="11" cy="11" r="9" fill="#3d4c63" stroke="#a9a9a9" strokeWidth="2.400" />
              <path d="M15 4L13 12.500L9 10Z" fill="#f4f4f4" />
              <path d="M7.500 18L9 10L13 12.500Z" fill="#d93a3a" />
            </svg>
          </DeckButton>
          <DeckButton aria-label="Page">
            <svg width="18" height="22" viewBox="0 0 18 22"><rect x=".5" y=".5" width="17" height="21" fill="#ececec" stroke="#bdbdbd" /></svg>
          </DeckButton>
          <DeckButton aria-label="Style inspector">
            <svg width="24" height="24" viewBox="0 0 24 24">
              <path d="M1 9Q8 1 16 8Q9 15 1 9Z" fill="#e9eef2" stroke="#8b8f93" />
              <path d="M1 7Q8-1 15 5" fill="none" stroke="#aaa" strokeWidth="1.500" />
              <circle cx="8" cy="8" r="3.800" fill="#3c82cc" />
              <circle cx="8" cy="8" r="1.500" fill="#16365c" />
              <Brush x={10} y={9} />
            </svg>
          </DeckButton>
          <Handle aria-label="Hide sidebar">
            <svg width="6" height="8" viewBox="0 0 6 8"><path d="M1 0L6 4L1 8Z" fill="#fff" /></svg>
          </Handle>
        </Sidebar>
      </Work>

      <StatusBar>
        <svg width="13" height="11" viewBox="0 0 13 11"><path d="M1 1H10V10H1Z" fill="#f1ecec" /><circle cx="6.500" cy="6.500" r="2.600" fill="#c63a44" /></svg>
        <span>Page 1 of 1</span>
        <span>Selected: 70 words, 381 characters</span>
        <span>Default Page Style</span>
        <span>English (USA)</span>
        <svg width="16" height="11" viewBox="0 0 16 11"><path d="M0 .5H5M0 9.500H5M2.500 .5V9.500M8 9.500H14" stroke="#bbb" fill="none" /></svg>
        <span>Table1:A1:G10</span>
        <StatusTools>
          <ViewIcons>
            <svg width="8" height="10" viewBox="0 0 8 10"><Sheet color="#d5643e" /></svg>
            <svg width="18" height="10" viewBox="0 0 18 10"><Sheet color="#777" /><Sheet color="#777" x={10} /></svg>
            <svg width="16" height="10" viewBox="0 0 16 10"><Sheet color="#777" flip /><Sheet color="#777" x={8} /></svg>
          </ViewIcons>
          <IconButton aria-label="Zoom out"><ZoomGlyph /></IconButton>
          <ZoomRange type="range" min={0} max={100} defaultValue={52} aria-label="Zoom" />
          <IconButton aria-label="Zoom in"><ZoomGlyph plus /></IconButton>
          <ZoomValue>130%</ZoomValue>
        </StatusTools>
      </StatusBar>
    </Window>
  );
}
